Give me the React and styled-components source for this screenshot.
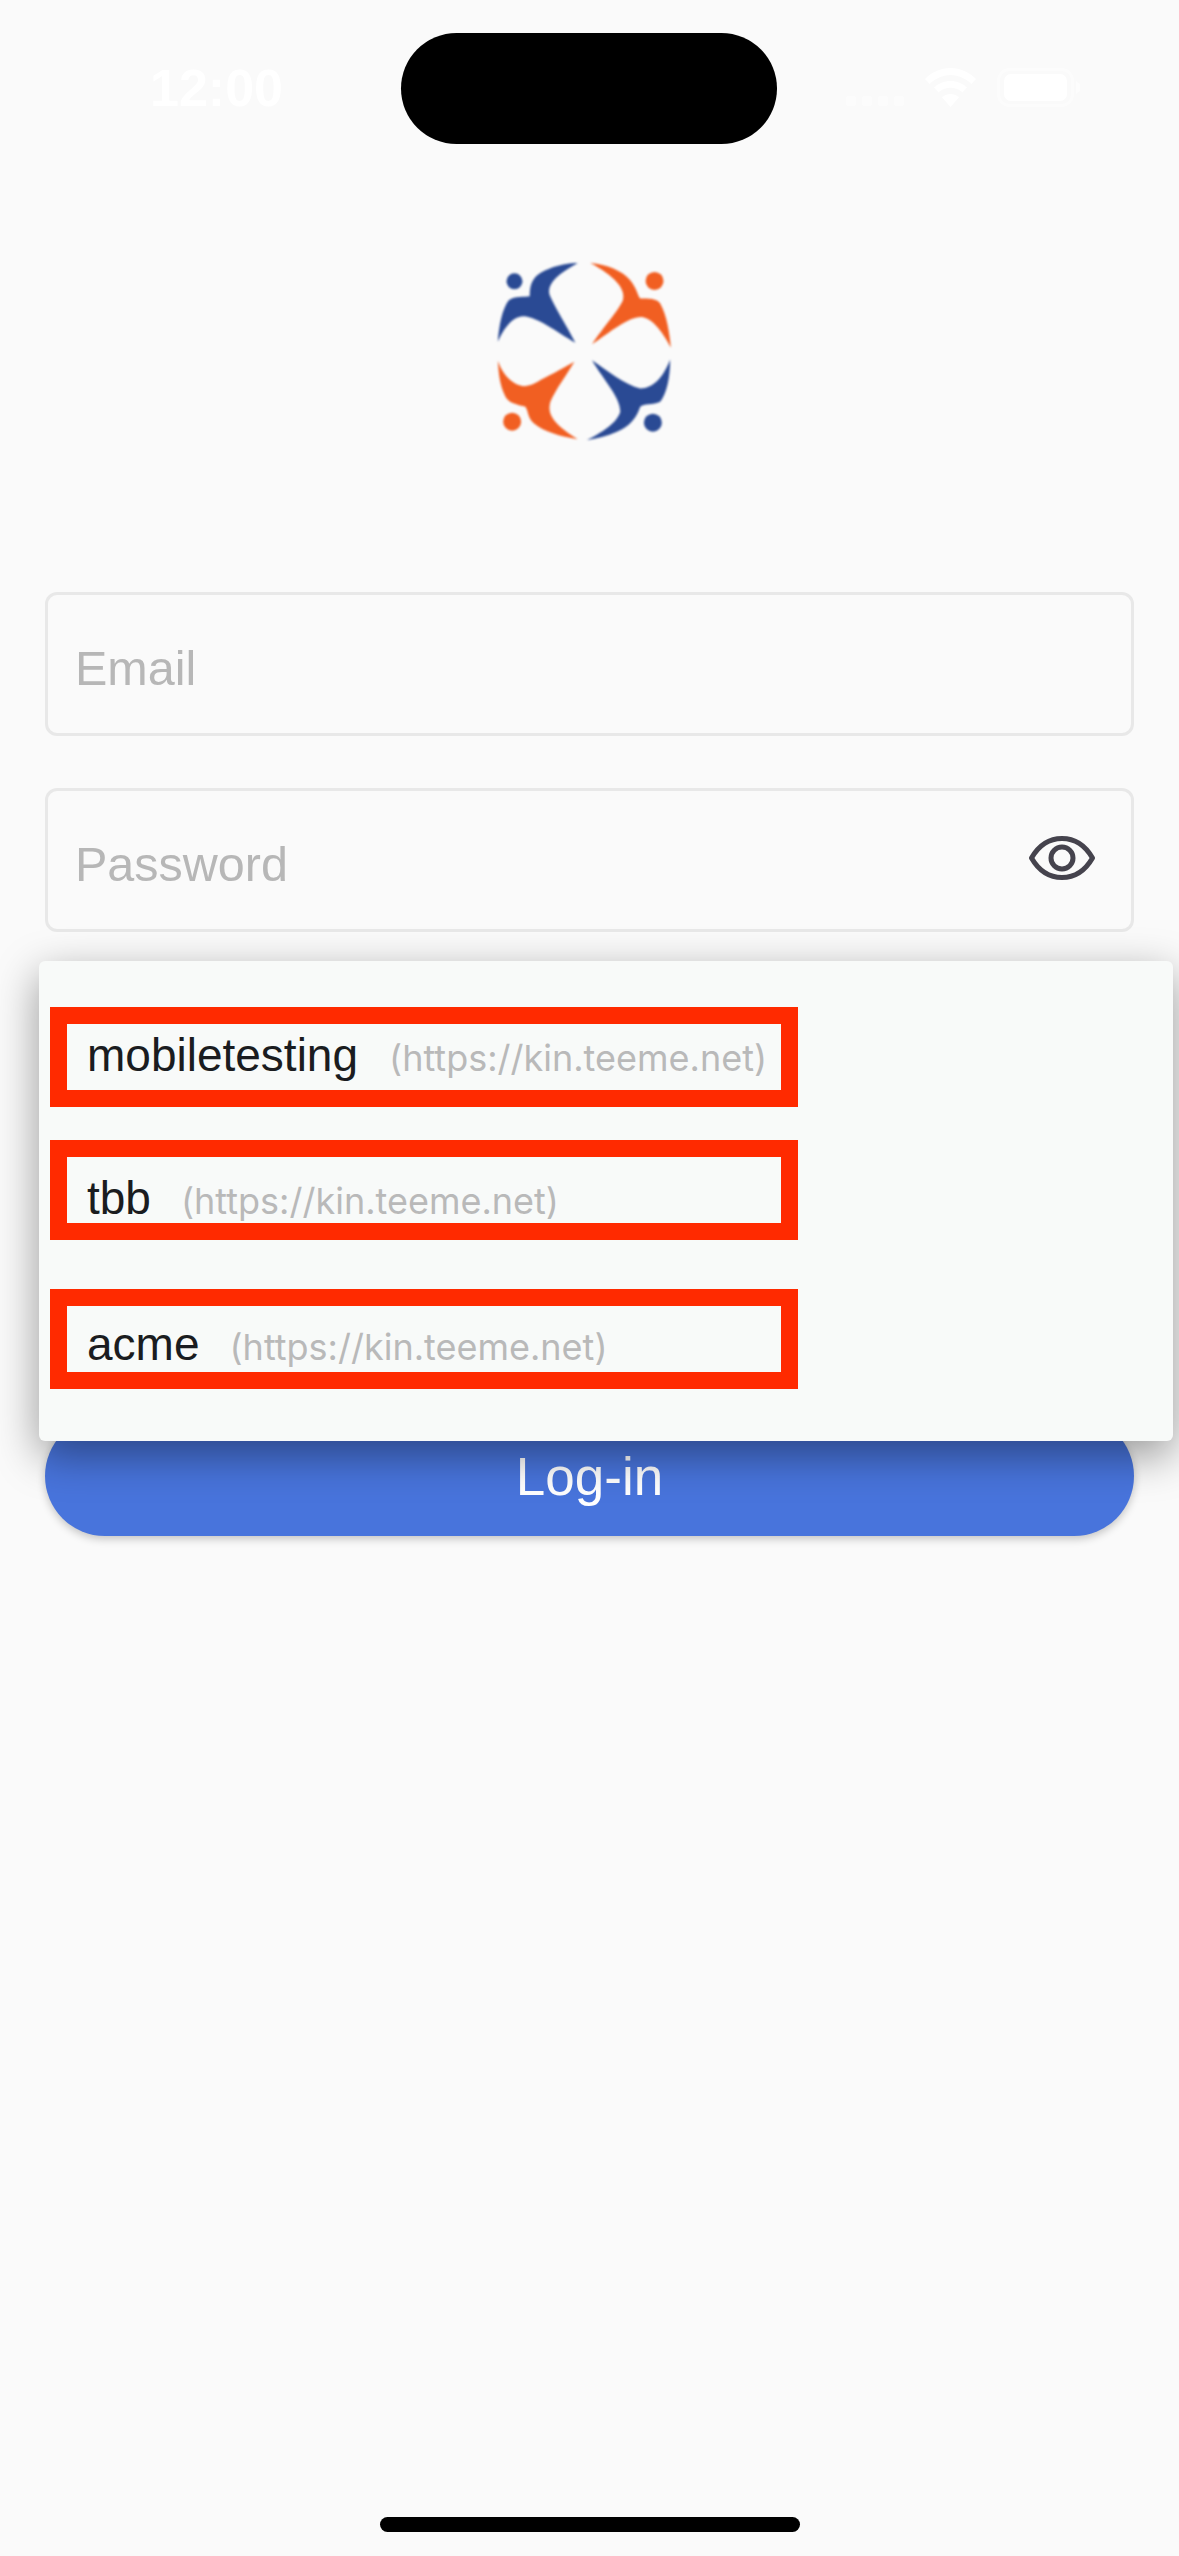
import React from "react";
import styled, { createGlobalStyle } from "styled-components";

const Global = createGlobalStyle`
  html, body {
    margin: 0;
    padding: 0;
    background: #fafafa;
  }
  * {
    box-sizing: border-box;
  }
`;

const Screen = styled.div`
  position: relative;
  width: 1179px;
  height: 2556px;
  overflow: hidden;
  background: #fafafa;
  font-family: "Liberation Sans", Arial, sans-serif;
  display: flex;
  flex-direction: column;
`;

const StatusBar = styled.div`
  height: 111px;
  margin-top: 33px;
  padding-left: 150px;
  display: flex;
  align-items: flex-start;
  color: #ffffff;
`;

const Clock = styled.div`
  width: 251px;
  margin-top: 25px;
  font-size: 52px;
  line-height: 60px;
  font-weight: 700;
`;

const Island = styled.div`
  width: 376px;
  height: 111px;
  border-radius: 56px;
  background: #000;
`;

const StatusIcons = styled.div`
  margin: 35px 0 0 69px;
  display: flex;
  align-items: flex-start;
  gap: 21px;
`;

const LogoWrap = styled.div`
  display: flex;
  justify-content: center;
  margin-top: 118px;
  padding-right: 10px;
  svg {
    filter: blur(1px);
  }
`;

const Form = styled.div`
  margin-top: 152px;
  padding: 0 45px;
  display: flex;
  flex-direction: column;
  gap: 52px;
`;

const Field = styled.div`
  height: 144px;
  padding: 0 36px 0 27px;
  border: 3px solid #e8e8e8;
  border-radius: 12px;
  display: flex;
  align-items: center;
  justify-content: space-between;
`;

const Placeholder = styled.span`
  font-size: 48.5px;
  line-height: 54px;
  color: #b7b7b7;
  margin-top: 8px;
`;

const EyeButton = styled.div`
  display: flex;
  margin-bottom: 4px;
`;

const LoginButton = styled.div`
  height: 120px;
  margin: 484px 45px 0;
  border-radius: 60px;
  background: #4874dc;
  color: #fff;
  font-size: 53px;
  display: flex;
  align-items: center;
  justify-content: center;
  box-shadow: 0 3px 8px rgba(0, 0, 0, 0.22);
`;

const Menu = styled.div`
  position: absolute;
  left: 39px;
  top: 961px;
  width: 1134px;
  height: 480px;
  padding: 46px 0 0 11px;
  background: #f8faf9;
  border-radius: 6px;
  box-shadow: 0 14px 44px rgba(0, 0, 0, 0.4);
  display: flex;
  flex-direction: column;
`;

const Account = styled.div`
  width: 748px;
  height: 100px;
  margin-top: ${(p) => p.$gap}px;
  padding: ${(p) => p.$top}px 0 0 20px;
  border: 17px solid #ff2a00;
  display: flex;
  align-items: baseline;
  gap: ${(p) => p.$space}px;
  white-space: nowrap;
`;

const AccountName = styled.span`
  font-size: 46px;
  line-height: 52px;
  color: #1a1c20;
`;

const AccountUrl = styled.span`
  font-family: Inter, "Liberation Sans", sans-serif;
  font-size: 36px;
  line-height: 40px;
  color: #b9b9b9;
`;

const HomeBar = styled.div`
  align-self: center;
  width: 420px;
  height: 15px;
  margin-top: auto;
  margin-bottom: 24px;
  border-radius: 8px;
  background: #000;
`;

const accounts = [
  { name: "mobiletesting", gap: 0, top: 5, space: 31 },
  { name: "tbb", gap: 33, top: 15, space: 30 },
  { name: "acme", gap: 49, top: 12, space: 30 },
];

const Signal = () => (
  <svg width="58" height="38" viewBox="0 0 58 38" fill="#fff" fillOpacity="0.45">
    <rect x="0" y="28" width="10" height="10" rx="2" />
    <rect x="16" y="28" width="10" height="10" rx="2" />
    <rect x="32" y="28" width="10" height="10" rx="2" />
    <rect x="48" y="28" width="10" height="10" rx="2" />
  </svg>
);

const Wifi = () => (
  <svg width="51" height="39" viewBox="0 0 51 39" fill="#fff">
    <path d="M25.500 0C15.500 0 7 4 0 11l4.500 5C10.500 10.500 17.500 7 25.500 7s15 3.500 21 9l4.500-5C44 4 35.500 0 25.500 0z" />
    <path d="M25.500 13c-6.500 0-12 2.500-16.500 6.500l4.500 5c3.300-3 7.300-4.800 12-4.800s8.700 1.800 12 4.800l4.500-5C37.500 15.500 32 13 25.500 13z" />
    <path d="M25.500 26c-3.500 0-6.500 1.300-8.500 3.300L25.500 39 34 29.300C32 27.300 29 26 25.500 26z" />
  </svg>
);

const Battery = () => (
  <svg width="84" height="39" viewBox="0 0 84 39">
    <rect x="1.500" y="1.500" width="74" height="36" rx="11" fill="none" stroke="#fff" strokeOpacity="0.45" strokeWidth="3" />
    <rect x="7" y="6" width="63" height="27" rx="7" fill="#fff" />
    <path d="M79 13 L83 16 V23 L79 26 Z" fill="#fff" fillOpacity="0.6" />
  </svg>
);

const Logo = () => (
  <svg width="175" height="178" viewBox="170 125 525 535">
    <g fill="#2a4a94">
      <path d="M412 128 C370 128 310 145 285 170 C270 188 268 205 268 228 C250 232 225 225 205 240 C185 265 175 320 172 365 C190 325 215 288 250 288 C290 290 350 335 405 368 C375 310 345 265 328 225 C318 195 345 165 412 128 Z" />
      <circle cx="222" cy="183" r="24" />
      <path d="M455 420 C500 450 555 495 600 505 C640 505 670 470 690 418 C690 470 680 520 660 545 C640 555 610 550 600 560 C590 590 570 620 530 635 C500 648 470 655 440 660 C480 640 530 610 540 575 C540 530 490 480 455 420 Z" />
      <circle cx="638" cy="608" r="27" />
    </g>
    <g fill="#f15f22">
      <path d="M450 128 C500 133 545 150 570 180 C590 205 592 225 600 235 C625 235 650 235 660 250 C680 285 688 340 692 382 C670 340 640 295 605 290 C565 288 510 335 455 372 C490 320 535 270 548 240 C558 205 520 165 450 128 Z" />
      <circle cx="643" cy="182" r="27" />
      <path d="M172 422 C185 460 210 490 245 498 C265 500 285 490 300 480 C340 460 375 440 402 425 C375 470 345 510 330 545 C320 580 335 610 412 658 C360 650 310 635 280 610 C260 590 265 575 255 560 C235 555 205 550 195 530 C175 490 175 455 172 422 Z" />
      <circle cx="215" cy="605" r="27" />
    </g>
  </svg>
);

const Eye = () => (
  <svg width="66" height="44" viewBox="0 0 66 44" fill="none" stroke="#45434d" strokeWidth="5">
    <path d="M2.500 22 C10 9 20 2.500 33 2.500 S56 9 63.500 22 C56 35 46 41.500 33 41.500 S10 35 2.500 22 Z" strokeLinejoin="round" />
    <circle cx="33" cy="22" r="11" />
  </svg>
);

const App = () => {
  return (
    <Screen>
      <Global />
      <StatusBar>
        <Clock>12:00</Clock>
        <Island />
        <StatusIcons>
          <Signal />
          <Wifi />
          <Battery />
        </StatusIcons>
      </StatusBar>
      <LogoWrap>
        <Logo />
      </LogoWrap>
      <Form>
        <Field>
          <Placeholder>Email</Placeholder>
        </Field>
        <Field>
          <Placeholder>Password</Placeholder>
          <EyeButton>
            <Eye />
          </EyeButton>
        </Field>
      </Form>
      <LoginButton>Log-in</LoginButton>
      <Menu>
        {accounts.map((a) => (
          <Account key={a.name} $gap={a.gap} $top={a.top} $space={a.space}>
            <AccountName>{a.name}</AccountName>
            <AccountUrl>(https://kin.teeme.net)</AccountUrl>
          </Account>
        ))}
      </Menu>
      <HomeBar />
    </Screen>
  );
};

export default App;
